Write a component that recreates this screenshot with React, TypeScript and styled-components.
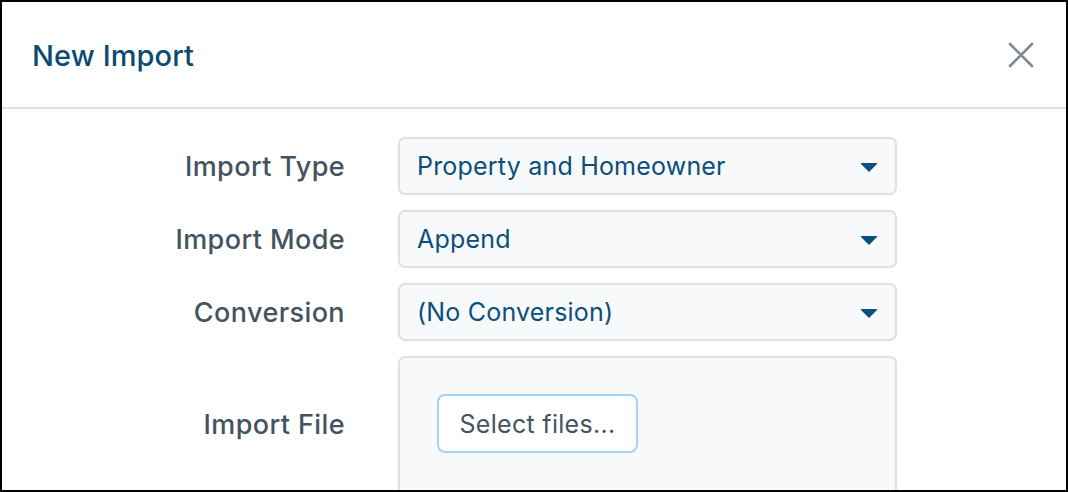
import React from 'react';
import styled, { createGlobalStyle } from 'styled-components';

const GlobalStyle = createGlobalStyle`
    html, body {
        margin: 0;
        padding: 0;
        background: #ffffff;
    }
    * {
        box-sizing: border-box;
    }
`

const Dialog = styled.div`
    width: 1068px;
    height: 492px;
    border: 2px solid #000000;
    background: #ffffff;
    overflow: hidden;
    font-family: Inter, "Noto Sans", "Liberation Sans", sans-serif;
    display: flex;
    flex-direction: column;
`

const Header = styled.div`
    height: 107px;
    flex: none;
    display: flex;
    align-items: center;
    justify-content: space-between;
    padding: 0 30px 0 30px;
    border-bottom: 2px solid #dde1e5;
`

const Title = styled.h2`
    margin: 0;
    padding-top: 2px;
    font-size: 29px;
    font-weight: 500;
    color: #0d4a72;
    letter-spacing: 0.1px;
`

const CloseButton = styled.button`
    border: none;
    background: none;
    padding: 0;
    width: 30px;
    height: 30px;
    display: flex;
    align-items: center;
    justify-content: center;
    cursor: pointer;
`

const Body = styled.div`
    padding-top: 28px;
    display: grid;
    grid-template-columns: 343px 499px;
    column-gap: 53px;
    row-gap: 15px;
    align-items: center;
`

const Label = styled.label`
    text-align: right;
    font-size: 27px;
    font-weight: 500;
    letter-spacing: 0.4px;
    color: #45535f;
`

const Select = styled.div`
    height: 58px;
    border: 2px solid #dde0e4;
    border-radius: 7px;
    background: #f8f9fb;
    display: flex;
    align-items: center;
    justify-content: space-between;
    padding: 0 17px 0 17px;
    font-size: 25px;
    letter-spacing: 0.2px;
    color: #0b4f7c;
`

const Caret = styled.span`
    width: 0;
    height: 0;
    border-left: 9px solid transparent;
    border-right: 9px solid transparent;
    border-top: 9px solid #0b4f7c;
    border-radius: 2px;
    margin-top: 2px;
`

const DropZone = styled.div`
    height: 150px;
    border: 2px solid #dde0e4;
    border-radius: 7px;
    background: #f8f9fb;
    padding: 36px 0 0 37px;
    align-self: start;
`

const FileButton = styled.button`
    height: 59px;
    width: 201px;
    border: 2px solid #a3d3f0;
    border-radius: 8px;
    background: #ffffff;
    font-family: inherit;
    font-size: 25px;
    letter-spacing: 0.3px;
    color: #45535f;
    cursor: pointer;
`

const FileLabel = styled(Label)`
    align-self: start;
    padding-top: 52px;
`

interface SelectFieldProps {
    label: string;
    value: string;
}

const SelectField: React.FC<SelectFieldProps> = ({ label, value }) => {
    return (
        <>
            <Label>{label}</Label>
            <Select>
                <span>{value}</span>
                <Caret />
            </Select>
        </>
    )
}

const App: React.FC = () => {
    return (
        <>
            <GlobalStyle />
            <Dialog>
                <Header>
                    <Title>New Import</Title>
                    <CloseButton aria-label="Close">
                        <svg width="26" height="26" viewBox="0 0 26 26">
                            <path d="M2 2 L24 24 M24 2 L2 24" stroke="#7d8a94" strokeWidth="2.6" strokeLinecap="round" />
                        </svg>
                    </CloseButton>
                </Header>
                <Body>
                    <SelectField label="Import Type" value="Property and Homeowner" />
                    <SelectField label="Import Mode" value="Append" />
                    <SelectField label="Conversion" value="(No Conversion)" />
                    <FileLabel>Import File</FileLabel>
                    <DropZone>
                        <FileButton>Select files...</FileButton>
                    </DropZone>
                </Body>
            </Dialog>
        </>
    )
}

export default App;
